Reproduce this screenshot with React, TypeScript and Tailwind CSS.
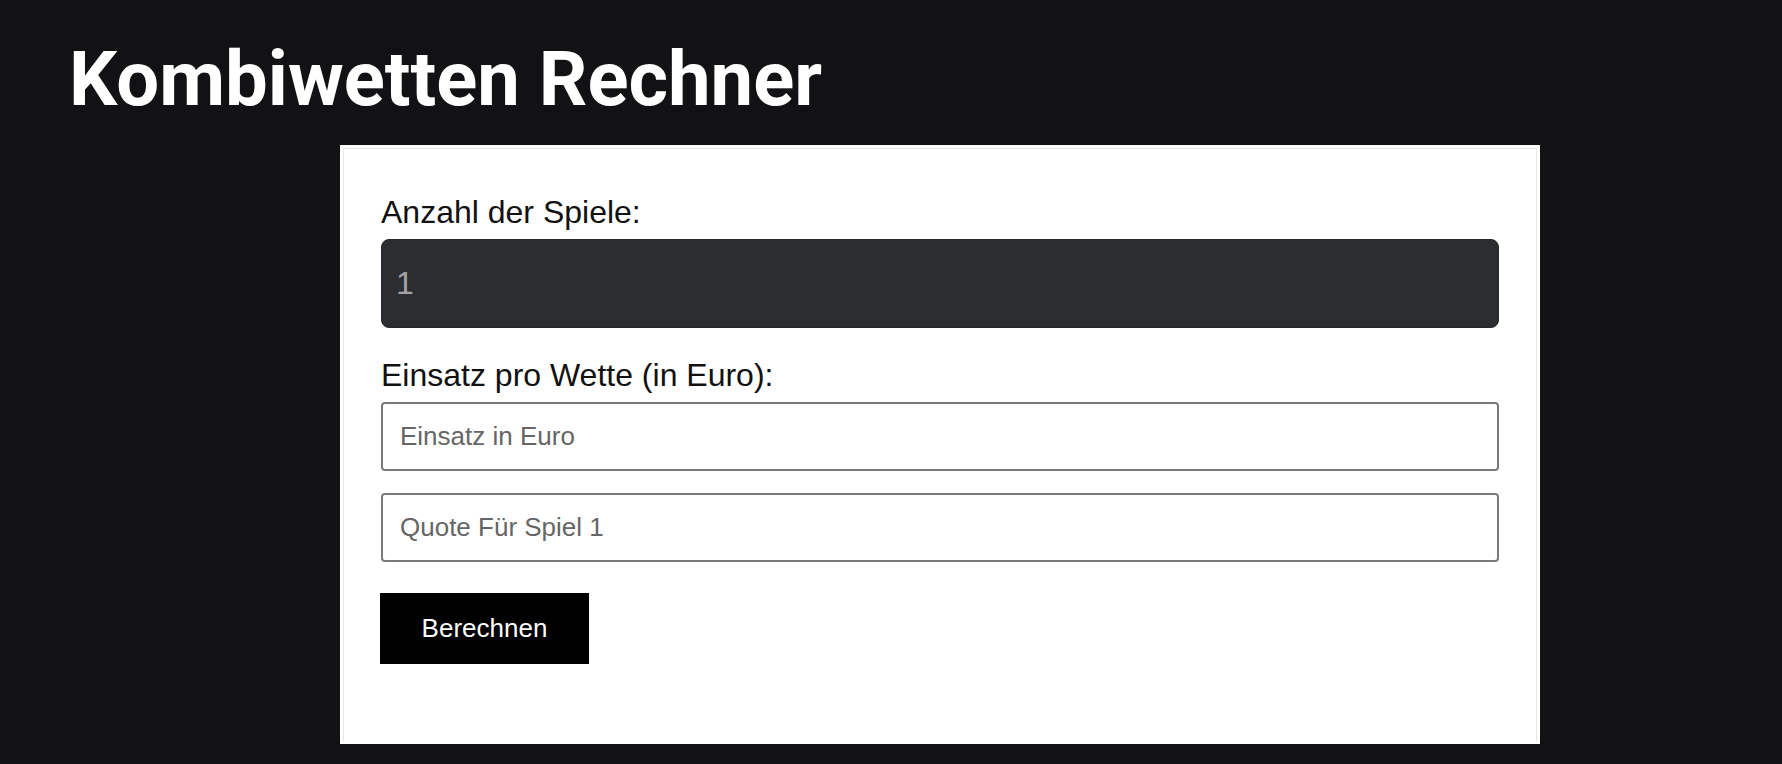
import { useState } from 'react'

const sans = '[font-family:"Liberation_Sans",Arial,sans-serif]'

export default function App() {
  const [games, setGames] = useState('1')
  const [stake, setStake] = useState('')
  const [odds, setOdds] = useState('')

  return (
    <div className="min-h-[764px] bg-[#121214] pt-[41px] pb-[21px]">
      <h1 className="pl-[69px] text-[76px] leading-[76px] font-bold text-white [font-family:Roboto,sans-serif]">
        Kombiwetten Rechner
      </h1>

      <div className="mt-[28px] ml-[340px] w-[1200px] bg-white p-[3px]">
        <div className={`border-x border-t border-[#e6e6e6] pt-[45px] px-[37px] pb-[77px] ${sans}`}>
          <label className="block text-[32px] leading-[37px] text-[#111]">Anzahl der Spiele:</label>
          <input
            type="number"
            value={games}
            onChange={(e) => setGames(e.target.value)}
            className="mt-[8px] block w-full h-[89px] rounded-[8px] bg-[#2b2d31] pl-[14px] text-[32px] text-[#a3a3a3] outline-none border border-[#25272b] [appearance:textfield] [&::-webkit-inner-spin-button]:appearance-none"
          />

          <label className="mt-[29px] block text-[32px] leading-[37px] text-[#111]">Einsatz pro Wette (in Euro):</label>
          <input
            type="text"
            value={stake}
            onChange={(e) => setStake(e.target.value)}
            placeholder="Einsatz in Euro"
            className="mt-[8px] block w-full h-[69px] rounded-[4px] border-2 border-[#7a7a7a] bg-white px-[17px] text-[26px] text-[#333] placeholder:text-[#666] outline-none"
          />
          <input
            type="text"
            value={odds}
            onChange={(e) => setOdds(e.target.value)}
            placeholder="Quote Für Spiel 1"
            className="mt-[22px] block w-full h-[69px] rounded-[4px] border-2 border-[#7a7a7a] bg-white px-[17px] text-[26px] text-[#333] placeholder:text-[#666] outline-none"
          />

          <button
            type="button"
            className="mt-[31px] -ml-px block h-[71px] w-[209px] bg-black text-[26px] text-white"
          >
            Berechnen
          </button>
        </div>
      </div>
    </div>
  )
}
